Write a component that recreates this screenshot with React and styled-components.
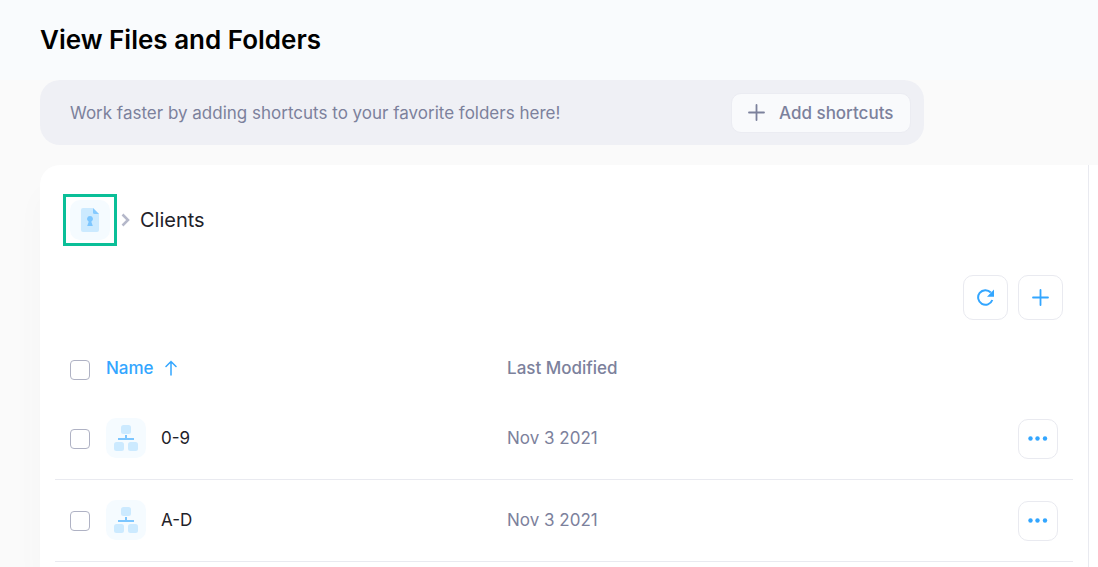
import React, { useState } from "react";
import styled, { createGlobalStyle } from "styled-components";

const GlobalStyle = createGlobalStyle`
  * {
    box-sizing: border-box;
  }
  body {
    margin: 0;
    background: #fafafa;
    font-family: "Inter", sans-serif;
    color: #1f2229;
  }
  button {
    font-family: inherit;
    cursor: pointer;
  }
`;

const Page = styled.main`
  min-height: 100vh;
  display: flex;
  flex-direction: column;
`;
const Header = styled.header`
  height: 80px;
  padding: 0 40px;
  display: flex;
  align-items: center;
  background: #f9fbfd;
`;
const Title = styled.h1`
  margin: 0;
  color: #000;
  font-size: 26px;
  line-height: 80px;
  font-weight: 600;
`;
const Shortcuts = styled.section`
  min-height: 65px;
  margin: 0 174px 20px 40px;
  padding: 0 13px 0 30px;
  display: flex;
  align-items: center;
  justify-content: space-between;
  border-radius: 20px;
  background: #eff0f5;
`;
const ShortcutsText = styled.p`
  margin: 0;
  color: #7c819c;
  font-size: 17px;
  white-space: nowrap;
`;
const ShortcutsButton = styled.button`
  min-width: 180px;
  height: 40px;
  padding: 0 16px;
  display: flex;
  align-items: center;
  gap: 14px;
  border: 1px solid #ebecf2;
  border-radius: 10px;
  background: #f9fafc;
  color: #7c819c;
  font-size: 17px;
  font-weight: 500;
  white-space: nowrap;
`;
const Content = styled.div`
  flex: 1;
  margin-left: 40px;
  display: flex;
  border-top-left-radius: 20px;
  background: #fff;
  box-shadow: -4px 24px 28px rgba(0, 0, 0, 0.02);
`;
const Files = styled.section`
  flex: 1;
  padding-top: 29px;
`;
const Side = styled.aside`
  width: 10px;
  border-left: 1px solid #e9eaf0;
`;
const Breadcrumb = styled.nav`
  padding-left: 23px;
  display: flex;
  align-items: center;
`;
const HomeLink = styled.a`
  width: 54px;
  height: 52px;
  margin-right: 4px;
  display: flex;
  align-items: center;
  justify-content: center;
  border: 3px solid #0abf98;
`;
const Current = styled.span`
  margin-left: 9px;
  font-size: 20px;
`;
const Tile = styled.span`
  width: 40px;
  height: 40px;
  flex: none;
  display: flex;
  align-items: center;
  justify-content: center;
  border-radius: 10px;
  background: #f5fbff;
`;
const Toolbar = styled.div`
  padding: 29px 25px 20px;
  display: flex;
  justify-content: flex-end;
  gap: 10px;
`;
const IconButton = styled.button`
  width: ${(props) => props.$size};
  height: ${(props) => props.$size};
  padding: 0;
  display: flex;
  align-items: center;
  justify-content: center;
  border: 1px solid #e9eaf0;
  border-radius: 10px;
  background: #fff;
  color: #33a6ff;
`;
const TableWrap = styled.div`
  padding: 0 15px;
`;
const Table = styled.table`
  width: 100%;
  table-layout: fixed;
  border-collapse: separate;
  border-spacing: 0;
  font-size: 17px;
`;
const Th = styled.th`
  width: ${(props) => props.$width};
  height: 58px;
  padding: 0 0 ${(props) => props.$lift || "0"} ${(props) => props.$indent || "0"};
  color: #7c819c;
  font-weight: 500;
  text-align: left;
`;
const Td = styled.td`
  height: 82px;
  padding: 0 0 ${(props) => props.$lift || "0"} ${(props) => props.$indent || "0"};
  border-bottom: 1px solid #e9eaf0;
  color: ${(props) => props.color || "#1f2229"};
`;
const SortButton = styled.button`
  padding: 0;
  display: flex;
  align-items: center;
  gap: 11px;
  border: 0;
  background: none;
  color: #33a6ff;
  font-size: 17px;
  font-weight: 500;
`;
const Name = styled.div`
  display: flex;
  align-items: center;
  gap: 15px;
`;
const Checkbox = styled.input.attrs({ type: "checkbox" })`
  appearance: none;
  display: block;
  width: 20px;
  height: 20px;
  margin: 2px 0 0;
  border: 1px solid #afb2c4;
  border-radius: 4px;
  background: #fff;
  &:checked {
    background: #33a6ff;
    border-color: #33a6ff;
  }
`;

const PlusIcon = () => (
  <svg width="17" height="17" viewBox="0 0 17 17" fill="none" aria-hidden="true">
    <path
      d="M8.500 1v15M1 8.500h15"
      stroke="currentColor"
      strokeWidth="1.8"
      strokeLinecap="round"
    />
  </svg>
);

const RefreshIcon = () => (
  <svg width="17" height="17" viewBox="0 0 17 17" fill="none" aria-hidden="true">
    <path
      d="M15.300 11A7.300 7.300 0 1 1 13.800 3.500"
      stroke="currentColor"
      strokeWidth="2"
    />
    <path d="M17 .5v7.300h-7z" fill="currentColor" />
  </svg>
);

const DotsIcon = () => (
  <svg width="20" height="6" viewBox="0 0 20 6" fill="currentColor" aria-hidden="true">
    <circle cx="2.5" cy="2.5" r="2.2" />
    <circle cx="9.5" cy="2.5" r="2.2" />
    <circle cx="17" cy="2.5" r="2.2" />
  </svg>
);

const ArrowUpIcon = () => (
  <svg width="12" height="16" viewBox="0 0 12 16" fill="none" aria-hidden="true">
    <path
      d="M6 15V1.5M1 6.5l5-5 5 5"
      stroke="currentColor"
      strokeWidth="1.5"
      strokeLinecap="round"
    />
  </svg>
);

const ChevronIcon = () => (
  <svg width="10" height="14" viewBox="0 0 10 14" fill="none" aria-hidden="true">
    <path d="M1.500 1.500L7 7l-5.500 5.500" stroke="#b5b8ca" strokeWidth="2.5" />
  </svg>
);

const PrivateFileIcon = () => (
  <svg width="18" height="24" viewBox="0 0 18 24" aria-hidden="true">
    <path
      d="M2 0h10l6 6v16a2 2 0 0 1-2 2H2a2 2 0 0 1-2-2V2a2 2 0 0 1 2-2z"
      fill="#cceaff"
    />
    <path d="M12 0l6 6h-4.500a1.500 1.500 0 0 1-1.500-1.500z" fill="#85caff" />
    <path
      d="M9 8a3 3 0 0 1 1.300 5.700L11.800 18H6.200l1.500-4.300A3 3 0 0 1 9 8z"
      fill="#7cc6ff"
    />
  </svg>
);

const FolderTreeIcon = () => (
  <svg width="24" height="26" viewBox="0 0 24 26" aria-hidden="true">
    <rect x="7" y="0" width="10" height="9" rx="2.500" fill="#cceaff" />
    <rect x="0" y="17" width="10" height="9" rx="2.500" fill="#cceaff" />
    <rect x="14" y="17" width="10" height="9" rx="2.500" fill="#cceaff" />
    <path d="M12 10v4M4 14h16" stroke="#7cc6ff" strokeWidth="2" />
  </svg>
);

const folders = [
  { name: "0-9", modified: "Nov 3 2021" },
  { name: "A-D", modified: "Nov 3 2021" },
];

const App = () => {
  const [selected, setSelected] = useState([]);

  const toggle = (name) =>
    setSelected(
      selected.includes(name)
        ? selected.filter((item) => item !== name)
        : [...selected, name]
    );
  const toggleAll = () =>
    setSelected(
      selected.length === folders.length ? [] : folders.map((f) => f.name)
    );

  return (
    <Page>
      <GlobalStyle />
      <Header>
        <Title>View Files and Folders</Title>
      </Header>
      <Shortcuts>
        <ShortcutsText>
          Work faster by adding shortcuts to your favorite folders here!
        </ShortcutsText>
        <ShortcutsButton>
          <PlusIcon />
          Add shortcuts
        </ShortcutsButton>
      </Shortcuts>
      <Content>
        <Files>
          <Breadcrumb aria-label="Breadcrumb">
            <HomeLink href="#" aria-label="Private files">
              <Tile>
                <PrivateFileIcon />
              </Tile>
            </HomeLink>
            <ChevronIcon />
            <Current>Clients</Current>
          </Breadcrumb>
          <Toolbar>
            <IconButton $size="45px" aria-label="Refresh">
              <RefreshIcon />
            </IconButton>
            <IconButton $size="45px" aria-label="Add">
              <PlusIcon />
            </IconButton>
          </Toolbar>
          <TableWrap>
            <Table>
              <thead>
                <tr>
                  <Th $width="51px" $indent="15px">
                    <Checkbox
                      aria-label="Select all"
                      checked={selected.length === folders.length}
                      onChange={toggleAll}
                    />
                  </Th>
                  <Th $width="39%" $lift="2px">
                    <SortButton>
                      Name
                      <ArrowUpIcon />
                    </SortButton>
                  </Th>
                  <Th $indent="4px" $lift="2px">
                    Last Modified
                  </Th>
                  <Th $width="55px" aria-label="Actions" />
                </tr>
              </thead>
              <tbody>
                {folders.map(({ name, modified }) => (
                  <tr key={name}>
                    <Td $indent="15px" $lift="2px">
                      <Checkbox
                        aria-label={`Select ${name}`}
                        checked={selected.includes(name)}
                        onChange={() => toggle(name)}
                      />
                    </Td>
                    <Td $lift="2px">
                      <Name>
                        <Tile>
                          <FolderTreeIcon />
                        </Tile>
                        {name}
                      </Name>
                    </Td>
                    <Td $indent="4px" $lift="2px" color="#7c819c">
                      {modified}
                    </Td>
                    <Td>
                      <IconButton $size="40px" aria-label={`More for ${name}`}>
                        <DotsIcon />
                      </IconButton>
                    </Td>
                  </tr>
                ))}
              </tbody>
            </Table>
          </TableWrap>
        </Files>
        <Side />
      </Content>
    </Page>
  );
};

export default App;
